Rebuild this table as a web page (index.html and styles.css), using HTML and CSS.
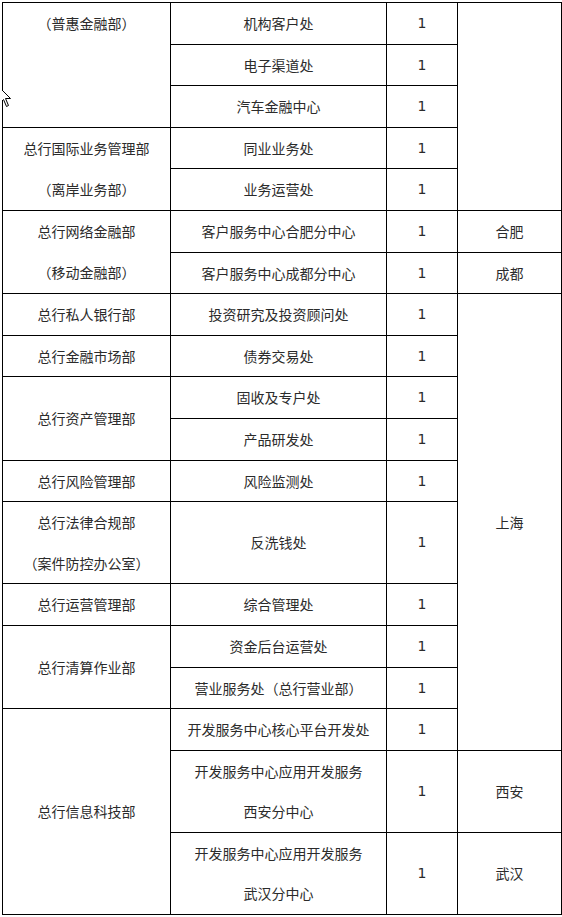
FILE: index.html
```html
<!DOCTYPE html>
<html lang="zh-CN">
<head>
<meta charset="utf-8">
<title>岗位表</title>
<link rel="stylesheet" href="styles.css">
</head>
<body>
<table class="grid">
  <colgroup>
    <col class="c-dept">
    <col class="c-post">
    <col class="c-num">
    <col class="c-city">
  </colgroup>
  <tbody>
    <tr><td rowspan="3" class="top">（普惠金融部）</td><td>机构客户处</td><td class="n">1</td><td rowspan="5"></td></tr>
    <tr><td>电子渠道处</td><td class="n">1</td></tr>
    <tr><td>汽车金融中心</td><td class="n">1</td></tr>
    <tr><td rowspan="2">总行国际业务管理部<br>（离岸业务部）</td><td>同业业务处</td><td class="n">1</td></tr>
    <tr><td>业务运营处</td><td class="n">1</td></tr>
    <tr><td rowspan="2">总行网络金融部<br>（移动金融部）</td><td>客户服务中心合肥分中心</td><td class="n">1</td><td>合肥</td></tr>
    <tr><td>客户服务中心成都分中心</td><td class="n">1</td><td>成都</td></tr>
    <tr><td>总行私人银行部</td><td>投资研究及投资顾问处</td><td class="n">1</td><td rowspan="10">上海</td></tr>
    <tr><td>总行金融市场部</td><td>债券交易处</td><td class="n">1</td></tr>
    <tr><td rowspan="2">总行资产管理部</td><td>固收及专户处</td><td class="n">1</td></tr>
    <tr><td>产品研发处</td><td class="n">1</td></tr>
    <tr><td>总行风险管理部</td><td>风险监测处</td><td class="n">1</td></tr>
    <tr><td>总行法律合规部<br>（案件防控办公室）</td><td>反洗钱处</td><td class="n">1</td></tr>
    <tr><td>总行运营管理部</td><td>综合管理处</td><td class="n">1</td></tr>
    <tr><td rowspan="2">总行清算作业部</td><td>资金后台运营处</td><td class="n">1</td></tr>
    <tr><td>营业服务处（总行营业部）</td><td class="n">1</td></tr>
    <tr><td rowspan="3">总行信息科技部</td><td>开发服务中心核心平台开发处</td><td class="n">1</td></tr>
    <tr><td>开发服务中心应用开发服务<br>西安分中心</td><td class="n">1</td><td>西安</td></tr>
    <tr><td>开发服务中心应用开发服务<br>武汉分中心</td><td class="n">1</td><td>武汉</td></tr>
  </tbody>
</table>
<svg class="cursor" width="14" height="22" viewBox="0 0 14 22" aria-hidden="true">
  <path d="M0.5 0.5 L0.5 16.5 L4.5 12.5 L7.5 19.5 L9.5 18.5 L6.5 11.5 L11.5 11.5 Z" fill="#fff" stroke="#000" stroke-width="1"/>
</svg>
</body>
</html>
```

FILE: styles.css
```css
html, body {
  background: #fff;
}
body {
  margin: 2px 0 0 2px;
  font-family: "Noto Sans CJK SC", "Microsoft YaHei", sans-serif;
  font-size: 14px;
  color: #2b2b2b;
  position: relative;
}
.grid {
  border-collapse: collapse;
  table-layout: fixed;
  width: 559px;
}
.c-dept { width: 168px; }
.c-post { width: 216px; }
.c-num { width: 71px; }
.c-city { width: 104px; }
.grid td {
  border: 1px solid #000;
  padding: 0;
  text-align: center;
  vertical-align: middle;
  line-height: 40.6px;
  white-space: nowrap;
}
.grid td.top {
  vertical-align: top;
}
.grid td.n {
  font-family: "DejaVu Sans", "Noto Sans CJK SC", sans-serif;
  font-size: 14px;
}
.cursor {
  position: absolute;
  left: -3px;
  top: 85px;
}
```
